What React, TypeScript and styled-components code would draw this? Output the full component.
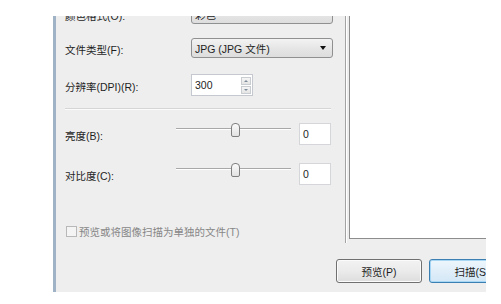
import React from "react";
import styled, { createGlobalStyle } from "styled-components";

const Global = createGlobalStyle`
  html, body { margin: 0; padding: 0; background: #ffffff; }
  body { font-family: "Liberation Sans", "Noto Sans CJK SC", sans-serif; }
`;

const Page = styled.div`
  width: 501px;
  height: 304px;
  background: #ffffff;
  padding: 16px 0 0 53px;
  box-sizing: border-box;
  overflow: hidden;
`;

const Dialog = styled.div`
  width: 433px;
  height: 276px;
  background: #eeeeee;
  border-left: 3px solid #9fb2c6;
  box-sizing: border-box;
  overflow: hidden;
  font-family: "Liberation Sans", "Noto Sans CJK SC", sans-serif;
  font-size: 10.5px;
  color: #1e1e1e;
`;

const Inner = styled.div`
  width: 470px;
  margin-top: -12px;
  padding-left: 9px;
  box-sizing: border-box;
  display: flex;
  flex-direction: column;
`;

const TopArea = styled.div`
  display: flex;
  gap: 12px;
  height: 239px;
`;

const Form = styled.div`
  width: 268px;
  display: flex;
  flex-direction: column;
`;

const Row = styled.div<{ $top: number; $h: number }>`
  display: flex;
  align-items: center;
  margin-top: ${(p) => p.$top}px;
  height: ${(p) => p.$h}px;
`;

const Label = styled.span<{ $w: number }>`
  width: ${(p) => p.$w}px;
  flex: none;
  white-space: nowrap;
  padding-top: 3px;
`;

const Combo = styled.div`
  width: 142px;
  height: 20px;
  box-sizing: border-box;
  border: 1px solid #8f9092;
  border-radius: 3px;
  background: linear-gradient(#f3f3f3, #e6e6e6 50%, #dddddd);
  display: flex;
  align-items: center;
  justify-content: space-between;
  padding: 0 6px 0 3px;
  color: #1e1e1e;
`;

const Arrow = styled.span`
  width: 0;
  height: 0;
  border-left: 3px solid transparent;
  border-right: 3px solid transparent;
  border-top: 4px solid #111;
`;

const Spinner = styled.div`
  width: 62px;
  height: 22px;
  box-sizing: border-box;
  border: 1px solid #c5c9cf;
  background: #fff;
  display: flex;
  align-items: center;
  justify-content: space-between;
  padding: 0 1px 0 3px;
`;

const SpinButtons = styled.div`
  display: flex;
  flex-direction: column;
  gap: 1px;
`;

const SpinBtn = styled.div<{ $up?: boolean }>`
  width: 10px;
  height: 8px;
  box-sizing: border-box;
  border: 1px solid #c9ccd1;
  background: linear-gradient(#f6f6f6, #e4e4e4);
  display: flex;
  align-items: center;
  justify-content: center;
  &::after {
    content: "";
    width: 0;
    height: 0;
    border-left: 2px solid transparent;
    border-right: 2px solid transparent;
    ${(p) =>
      p.$up ? "border-bottom: 2px solid #7d8a9a;" : "border-top: 2px solid #7d8a9a;"}
  }
`;

const Separator = styled.div`
  margin-top: 12px;
  width: 266px;
  height: 1px;
  background: #d5d5d5;
  border-bottom: 1px solid #fbfbfb;
`;

const Slider = styled.div`
  position: relative;
  width: 115px;
  height: 14px;
  align-self: flex-start;
  flex: none;
`;

const Track = styled.div`
  position: absolute;
  left: 0;
  right: 0;
  top: 5px;
  height: 1px;
  background: #a8a8a8;
  border-bottom: 1px solid #ffffff;
`;

const Thumb = styled.div`
  position: absolute;
  left: 55px;
  top: 0;
  width: 9px;
  height: 14px;
  box-sizing: border-box;
  border: 1px solid #7f7f7f;
  border-radius: 4px 4px 2px 2px;
  background: linear-gradient(#fafafa, #e2e2e2);
`;

const ValueBox = styled.div`
  margin-left: 8px;
  width: 32px;
  height: 22px;
  box-sizing: border-box;
  border: 1px solid #d4d6da;
  background: #fff;
  display: flex;
  align-items: center;
  padding-left: 3px;
`;

const CheckRow = styled.label`
  margin-top: 39px;
  display: flex;
  align-items: center;
  gap: 2px;
  color: #878787;
  margin-left: 1px;
`;

const CheckBox = styled.span`
  width: 11px;
  height: 11px;
  box-sizing: border-box;
  border: 1px solid #b8b8b8;
  background: #f4f4f4;
`;

const PreviewFrame = styled.div`
  flex: none;
  width: 150px;
  margin-top: -10px;
  height: 249px;
  border-left: 1px solid #a3a3a3;
  box-shadow: inset 1px 0 0 #ffffff;
  padding: 0 0 4px 3px;
  box-sizing: border-box;
  display: flex;
`;

const PreviewBox = styled.div`
  flex: 1;
  background: #ffffff;
  border-left: 1px solid #8d8d8d;
  border-bottom: 1px solid #8d8d8d;
`;

const ButtonRow = styled.div`
  display: flex;
  gap: 7px;
  margin-top: 16px;
  padding-left: 271px;
`;

const Button = styled.div<{ $primary?: boolean }>`
  width: 86px;
  height: 24px;
  flex: none;
  box-sizing: border-box;
  border-radius: 3px;
  border: 1px solid ${(p) => (p.$primary ? "#3c7fb1" : "#707070")};
  background: ${(p) =>
    p.$primary
      ? "linear-gradient(#eef6fc, #e0eef9 50%, #d3e7f6)"
      : "linear-gradient(#f2f2f2, #ebebeb 50%, #dddddd)"};
  box-shadow: inset 0 0 0 1px ${(p) => (p.$primary ? "#a7d7f4" : "#fbfbfb")};
  display: flex;
  align-items: center;
  justify-content: center;
  color: #1e1e1e;
  padding-top: 1px;
`;

export default function App() {
  return (
    <>
      <Global />
      <Page>
        <Dialog>
          <Inner>
            <TopArea>
              <Form>
                <Row $top={0} $h={20}>
                  <Label $w={126}>颜色格式(O):</Label>
                  <Combo>
                    <span>彩色</span>
                    <Arrow />
                  </Combo>
                </Row>
                <Row $top={14} $h={20}>
                  <Label $w={126}>文件类型(F):</Label>
                  <Combo>
                    <span>JPG (JPG 文件)</span>
                    <Arrow />
                  </Combo>
                </Row>
                <Row $top={16} $h={22}>
                  <Label $w={126}>分辨率(DPI)(R):</Label>
                  <Spinner>
                    <span>300</span>
                    <SpinButtons>
                      <SpinBtn $up />
                      <SpinBtn />
                    </SpinButtons>
                  </Spinner>
                </Row>
                <Separator />
                <Row $top={13} $h={22}>
                  <Label $w={111}>亮度(B):</Label>
                  <Slider>
                    <Track />
                    <Thumb />
                  </Slider>
                  <ValueBox>0</ValueBox>
                </Row>
                <Row $top={18} $h={22}>
                  <Label $w={111}>对比度(C):</Label>
                  <Slider>
                    <Track />
                    <Thumb />
                  </Slider>
                  <ValueBox>0</ValueBox>
                </Row>
                <CheckRow>
                  <CheckBox />
                  <span>预览或将图像扫描为单独的文件(T)</span>
                </CheckRow>
              </Form>
              <PreviewFrame>
                <PreviewBox />
              </PreviewFrame>
            </TopArea>
            <ButtonRow>
              <Button>预览(P)</Button>
              <Button $primary>扫描(S)</Button>
            </ButtonRow>
          </Inner>
        </Dialog>
      </Page>
    </>
  );
}
